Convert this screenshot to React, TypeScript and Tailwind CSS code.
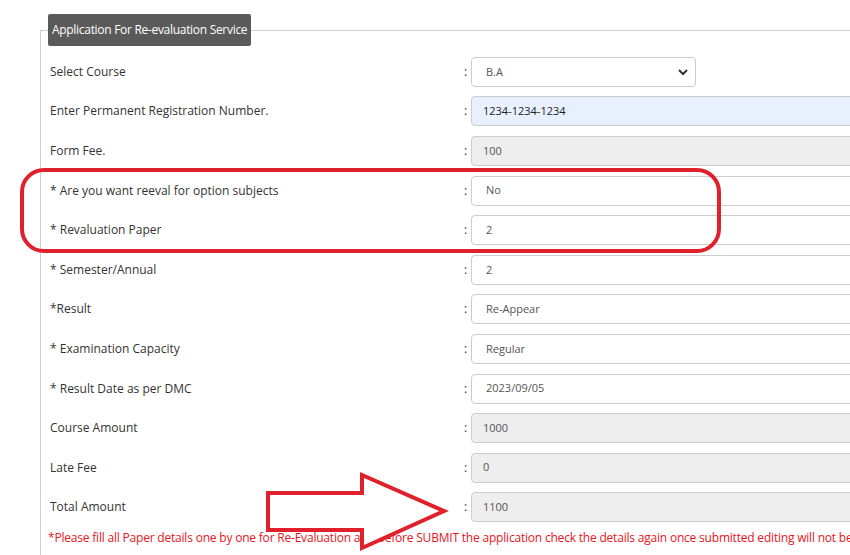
import React from "react";

type Row = { label: string; value: string; kind: "select" | "blue" | "ro" | "w" };
const rows: Row[] = [
  { label: "Select Course", value: "B.A", kind: "select" },
  { label: "Enter Permanent Registration Number.", value: "1234-1234-1234", kind: "blue" },
  { label: "Form Fee.", value: "100", kind: "ro" },
  { label: "* Are you want reeval for option subjects", value: "No", kind: "w" },
  { label: "* Revaluation Paper", value: "2", kind: "w" },
  { label: "* Semester/Annual", value: "2", kind: "w" },
  { label: "*Result", value: "Re-Appear", kind: "w" },
  { label: "* Examination Capacity", value: "Regular", kind: "w" },
  { label: "* Result Date as per DMC", value: "2023/09/05", kind: "w" },
  { label: "Course Amount", value: "1000", kind: "ro" },
  { label: "Late Fee", value: "0", kind: "ro" },
  { label: "Total Amount", value: "1100", kind: "ro" },
];

export default function App() {
  return (
    <div className="relative w-[850px] h-[555px] overflow-hidden bg-white text-[#333]" style={{ fontFamily: '"Open Sans", "Noto Sans", sans-serif' }}>
      <div className="absolute left-[40px] top-[30px] w-[900px] h-[600px] border-l border-t border-[#cfcfcf]" />
      <div className="relative pt-[14px] pl-[48px] w-[1300px]">
        <div className="inline-block bg-[#5a5a5a] text-white text-[12px] leading-[32px] px-[4px] rounded-[2px] tracking-[-0.3px]">
          Application For Re-evaluation Service
        </div>
        <div className="flex flex-col mt-[6px]">
          {rows.map((r) => (
            <div key={r.label} className="flex items-center h-[39.6px]">
              <div className="w-[416px] shrink-0 pl-[2px] text-[12px]">{r.label}</div>
              <div className="w-[7px] shrink-0 text-[12px]">:</div>
              {r.kind === "select" ? (
                <div className="w-[225px] shrink-0 h-[30px] border border-[#ccc] rounded-[4px] flex items-center justify-between pl-[14px] pr-[6px] text-[11px] text-[#555]">
                  B.A
                  <svg width="12" height="12" viewBox="0 0 12 12"><path d="M2 4l4 4 4-4" fill="none" stroke="#333" strokeWidth="2" /></svg>
                </div>
              ) : (
                <div
                  className={`w-[420px] shrink-0 h-[30px] border border-[#ccc] rounded-[4px] flex items-center text-[11px] ${
                    r.kind === "blue" ? "bg-[#e8f0fe] text-[#222] pl-[11px]" : r.kind === "ro" ? "bg-[#eeeeee] text-[#555] pl-[11px]" : "bg-white text-[#555] pl-[14px]"
                  }`}
                >
                  {r.value}
                </div>
              )}
            </div>
          ))}
        </div>
        <div className="text-[#e8141c] text-[12px] font-medium mt-[2px] whitespace-nowrap tracking-[-0.2px]">
          *Please fill all Paper details one by one for Re-Evaluation and before SUBMIT the application check the details again once submitted editing will not be possible
        </div>
      </div>
      <svg className="absolute left-0 top-0" width="850" height="555">
        <rect x="22" y="170" width="697" height="81" rx="22" fill="none" stroke="#e0202a" strokeWidth="4" />
        <path d="M268 493 H362 V475 L444 511 L362 548 V530 H268 Z" fill="white" stroke="#e0202a" strokeWidth="4" strokeLinejoin="miter" />
      </svg>
    </div>
  );
}
